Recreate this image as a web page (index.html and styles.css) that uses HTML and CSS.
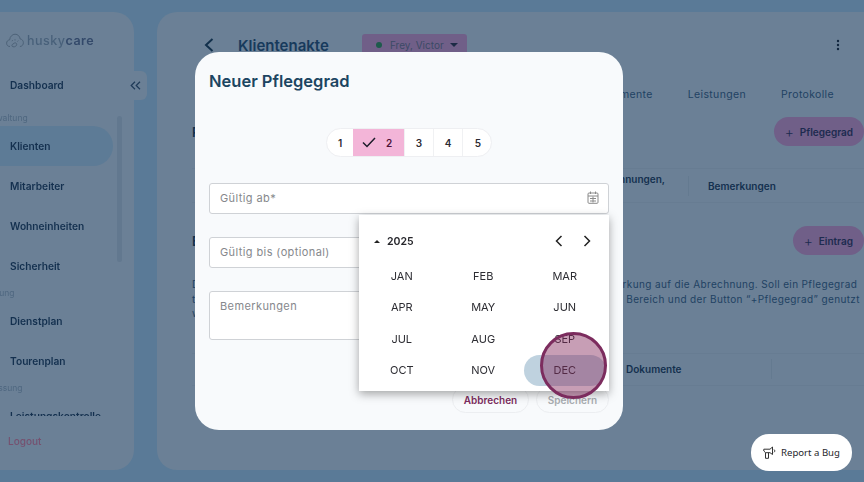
FILE: index.html
```html
<!DOCTYPE html>
<html lang="de">
<head>
    <meta charset="UTF-8">
    <title>huskycare</title>
    <link rel="stylesheet" href="styles.css">
</head>
<body>
    <div class="page">
        <aside class="sidebar">
            <div class="logo">
                <svg width="18" height="15" viewBox="0 0 18 15" fill="none" stroke="#4d6278" stroke-width="1"><path d="M4 13.500C1.800 13.500.6 12 .6 10.200.6 8.300 2 7 3.600 6.900 4 3.500 6.400 1.200 9 1.200c2.800 0 4.800 2 5.200 4.800 1.900.2 3.200 1.800 3.200 3.700 0 2-1.400 3.800-3.500 3.800"/><path d="M7 13.800c-1.200-.3-1.500-1.800-.5-2.500l2-1.300c1-.6 2.200.2 2.200 1.400 0 1.300-1.500 2.800-3.700 2.400zM6 8.200l.6-1M9 7.500V6.300M11.500 8.500l.8-.9"/></svg>
                <span class="logo-text">husky<b>care</b></span>
            </div>
            <a class="nav-item nav-top">Dashboard</a>
            <div class="nav-scroll">
                <div class="nav-label nav-label-first">Verwaltung</div>
                <a class="nav-item active">Klienten</a>
                <a class="nav-item">Mitarbeiter</a>
                <a class="nav-item">Wohneinheiten</a>
                <a class="nav-item">Sicherheit</a>
                <div class="nav-label">Planung</div>
                <a class="nav-item">Dienstplan</a>
                <a class="nav-item">Tourenplan</a>
                <div class="nav-label">Erfassung</div>
                <a class="nav-item">Leistungskontrolle</a>
            </div>
            <div class="scrollbar"></div>
            <a class="logout">Logout</a>
            <div class="collapse">
                <svg width="11" height="9" viewBox="0 0 11 9" fill="none" stroke="#1f3a58" stroke-width="1.200"><path d="M5 .8 1.200 4.500 5 8.200M10 .8 6.200 4.500 10 8.200"/></svg>
            </div>
        </aside>

        <main class="content">
            <div class="top-row">
                <svg class="back" width="10" height="14" viewBox="0 0 10 14" fill="none" stroke="#12304c" stroke-width="2"><path d="M8.500 1 2 7l6.500 6"/></svg>
                <h1 class="page-title">Klientenakte</h1>
                <div class="client-chip">
                    <span class="dot"></span>
                    Frey, Victor
                    <span class="caret"></span>
                </div>
                <svg class="more" width="4" height="12" viewBox="0 0 4 12" fill="#12263f"><circle cx="2" cy="2" r="1.200"/><circle cx="2" cy="6" r="1.200"/><circle cx="2" cy="10" r="1.200"/></svg>
            </div>
            <div class="tabs">
                <span>Dokumente</span>
                <span>Leistungen</span>
                <span>Protokolle</span>
            </div>
            <div class="section-row">
                <h2>Pflegegrad</h2>
                <button class="add-btn"><span class="plus">+</span>Pflegegrad</button>
            </div>
            <div class="table table-one">
                <div></div>
                <div class="cell-two">Anerkennungen,<br>&nbsp;</div>
                <div class="cell-last">Bemerkungen</div>
            </div>
            <div class="section-row section-two">
                <h2>Einträge</h2>
                <button class="add-btn"><span class="plus">+</span>Eintrag</button>
            </div>
            <p class="note">Die Einstufung in einen Pflegegrad hat für Klienten, und den Betreuungsdienst Auswirkung auf die Abrechnung. Soll ein Pflegegrad<br>
            tatsächlich geändert oder neu eingetragen werden, sollte dafür ausschließlich dieser Bereich und der Button “+Pflegegrad” genutzt<br>
            werden.</p>
            <div class="table table-two">
                <div></div>
                <div class="cell-docs">Dokumente</div>
                <div></div>
            </div>
        </main>
    </div>

    <div class="modal">
        <h2 class="modal-title">Neuer Pflegegrad</h2>
        <div class="stepper-wrap">
            <div class="stepper">
                <div class="step step-first">1</div>
                <div class="step step-on">
                    <svg width="14" height="11" viewBox="0 0 14 11" fill="none" stroke="#1c1c2a" stroke-width="1.500"><path d="M1 5.500 5 9.500 13 1"/></svg>
                    <span>2</span>
                </div>
                <div class="step">3</div>
                <div class="step">4</div>
                <div class="step step-last">5</div>
            </div>
        </div>
        <div class="field">
            Gültig ab*
            <svg width="12" height="13" viewBox="0 0 12 13" fill="none" stroke="#8a8a8a" stroke-width="1"><rect x="1" y="2" width="10" height="10.300" rx="1"/><path d="M1 5h10M3.500.5v2.500M8.500.5v2.500M3 7.500h6M3 10h6M6 5.500v6"/></svg>
        </div>
        <div class="field">Gültig bis (optional)</div>
        <div class="field field-area">Bemerkungen</div>
        <div class="actions">
            <button class="btn-cancel">Abbrechen</button>
            <button class="btn-save">Speichern</button>
        </div>

        <div class="picker">
            <div class="picker-head">
                <span class="year-caret"></span>
                <span class="year">2025</span>
                <svg class="prev" width="8" height="12" viewBox="0 0 8 12" fill="none" stroke="#222" stroke-width="1.500"><path d="M6.500 1 1.500 6l5 5"/></svg>
                <svg class="next" width="8" height="12" viewBox="0 0 8 12" fill="none" stroke="#222" stroke-width="1.500"><path d="M1.500 1l5 5-5 5"/></svg>
            </div>
            <div class="months">
                <span>JAN</span><span>FEB</span><span>MAR</span>
                <span>APR</span><span>MAY</span><span>JUN</span>
                <span>JUL</span><span>AUG</span><span>SEP</span>
                <span>OCT</span><span>NOV</span><span class="month-on">DEC</span>
            </div>
            <div class="touch"></div>
        </div>
    </div>

    <button class="report">
        <svg width="13" height="13" viewBox="0 0 13 13" fill="none" stroke="#333" stroke-width="1"><path d="M.8 3.200h6.200L9.500 1v7.500L7 6.700H2.500L.8 5zM2.500 6.700v5.600h3V6.700M11 3.500c1 .6 1 2.200 0 2.800"/></svg>
        Report a Bug
    </button>
</body>
</html>
```

FILE: styles.css
```css
* {
    box-sizing: border-box;
}

body {
    margin: 0;
    width: 864px;
    height: 482px;
    overflow: hidden;
    position: relative;
    background-color: #5a7a97;
    font-family: 'Inter', 'Liberation Sans', sans-serif;
    color: #12304c;
}

button {
    font-family: inherit;
    border: none;
    padding: 0;
}

/* layout */
.page {
    display: flex;
    gap: 23px;
    margin-left: -30px;
    padding-top: 12px;
    height: 470px;
    filter: blur(0.4px);
}

/* sidebar */
.sidebar {
    flex: none;
    position: relative;
    width: 164px;
    background-color: #6b8096;
    border-radius: 20px;
}

.logo {
    display: flex;
    align-items: center;
    gap: 3px;
    height: 20px;
    margin: 18px 0 15px 36px;
}

.logo-text {
    font-size: 12.500px;
    font-weight: 500;
    color: #48607a;
    letter-spacing: 0.500px;
}

.logo-text b {
    font-weight: 600;
    color: #33496a;
}

.nav-item {
    display: flex;
    align-items: center;
    height: 40px;
    margin-right: 21px;
    padding-left: 40px;
    font-size: 10.200px;
    font-weight: 600;
    color: #14304f;
    white-space: nowrap;
}

.nav-item.active {
    background-color: #5d7b96;
    border-radius: 0 20px 20px 0;
}

.nav-scroll {
    height: 311px;
    overflow: hidden;
}

.nav-label {
    height: 15px;
    line-height: 15px;
    padding-left: 12px;
    font-size: 8.500px;
    color: #4f6780;
}

.nav-label-first {
    height: 21px;
    padding-top: 6px;
}

.scrollbar {
    position: absolute;
    left: 147px;
    top: 104px;
    width: 5px;
    height: 146px;
    border-radius: 3px;
    background-color: #62788f;
}

.logout {
    display: block;
    margin: 18px 0 0 38px;
    line-height: 14px;
    font-size: 10px;
    font-weight: 500;
    color: #76506f;
}

.collapse {
    position: absolute;
    left: 164px;
    top: 59px;
    width: 13px;
    height: 29px;
    padding: 10px 0 0 1px;
    background-color: #6b8096;
    border-radius: 0 6px 6px 0;
}

.collapse svg {
    display: block;
    margin-left: -5px;
}

/* main */
.content {
    flex: none;
    width: 707px;
    padding: 22px 0 0 35px;
    background-color: #6b8096;
    border-radius: 20px 0 0 20px;
}

.top-row {
    display: flex;
    align-items: center;
    height: 22px;
}

.back {
    margin-left: 12px;
}

.page-title {
    flex: none;
    width: 92px;
    margin: 0 0 0 24px;
    font-size: 15px;
    font-weight: 600;
    white-space: nowrap;
    color: #173a5c;
}

.client-chip {
    display: flex;
    align-items: center;
    width: 105px;
    height: 22px;
    margin-left: 32px;
    padding-left: 14px;
    background-color: #705f88;
    border-radius: 3px;
    font-size: 10px;
    color: #3b4a66;
    white-space: nowrap;
}

.dot {
    width: 6px;
    height: 6px;
    margin-right: 8px;
    border-radius: 50%;
    background-color: #1d5b4c;
}

.caret {
    margin-left: 6px;
    border-top: 4px solid #1c2a45;
    border-left: 4px solid transparent;
    border-right: 4px solid transparent;
}

.more {
    margin-left: auto;
    margin-right: 24px;
}

.tabs {
    display: flex;
    justify-content: flex-end;
    gap: 35px;
    height: 20px;
    margin: 29px 30px 0 0;
    line-height: 20px;
    font-size: 10.500px;
    letter-spacing: 0.350px;
    color: #1f4263;
}

.section-row {
    display: flex;
    align-items: center;
    justify-content: space-between;
    height: 29px;
    margin-top: 12px;
}

.section-row h2 {
    margin: 0;
    font-size: 13px;
    font-weight: 600;
    color: #12304c;
}

.section-two {
    margin-top: 23px;
}

.add-btn {
    display: flex;
    align-items: center;
    height: 29px;
    padding: 0 11px;
    background-color: #705f88;
    border-radius: 15px;
    font-size: 10px;
    font-weight: 600;
    color: #1d2b4f;
}

.plus {
    margin-right: 6px;
    font-size: 14px;
    font-weight: 300;
}

.table {
    display: grid;
    align-items: center;
    font-size: 10px;
    font-weight: 600;
    color: #14304f;
    border-top: 1px solid #677c92;
    border-bottom: 1px solid #677c92;
}

.table-one {
    grid-template-columns: 378px 118px 1fr;
    height: 35px;
    margin-top: 22px;
}

.cell-two {
    text-align: right;
    padding-right: 23px;
    line-height: 13px;
}

.cell-last {
    height: 20px;
    line-height: 20px;
    padding-left: 19px;
    border-left: 1px solid #647a90;
}

.note {
    margin: 22px 0 0;
    font-size: 10px;
    line-height: 14.500px;
    letter-spacing: 0.370px;
    color: #1f4263;
    white-space: nowrap;
}

.table-two {
    grid-template-columns: 434px 146px 1fr;
    height: 33px;
    margin-top: 32px;
}

.cell-docs {
    height: 20px;
    line-height: 20px;
    border-right: 1px solid #647a90;
}

/* modal */
.modal {
    position: absolute;
    left: 195px;
    top: 52px;
    width: 428px;
    height: 378px;
    padding: 18px 14px 0;
    background-color: #f8fafc;
    border-radius: 24px;
}

.modal-title {
    margin: 0;
    line-height: 22px;
    font-size: 16.500px;
    font-weight: 600;
    color: #1c4561;
}

.stepper-wrap {
    display: flex;
    justify-content: center;
    margin: 36px 0 26px;
}

.stepper {
    display: flex;
    height: 29px;
    background-color: #fff;
    border: 1px solid #eeeff2;
    border-radius: 15px;
    overflow: hidden;
}

.step {
    display: flex;
    align-items: center;
    justify-content: center;
    width: 29px;
    border-left: 1px solid #f0f1f3;
    font-size: 10px;
    font-weight: 600;
    color: #2b2b33;
}

.step-first {
    width: 26px;
    border-left: none;
}

.step-on {
    gap: 10px;
    width: 51px;
    padding-right: 3px;
    border-left: none;
    background-color: #f3b5d8;
    color: #4d1237;
}

.step-last {
    padding-left: 2px;
}

.field {
    display: flex;
    align-items: center;
    justify-content: space-between;
    height: 31px;
    margin-bottom: 23px;
    padding: 0 9px 2px 10px;
    background-color: #fff;
    border: 1px solid #cfd2d6;
    border-radius: 3px;
    font-size: 11px;
    letter-spacing: 0.400px;
    color: #86888c;
}

.field-area {
    align-items: flex-start;
    height: 49px;
    padding-top: 7px;
}

.actions {
    display: flex;
    justify-content: flex-end;
    gap: 7px;
    margin-top: -23px;
    padding-top: 46px;
}

.actions button {
    height: 27px;
    border: 1px solid #eceef1;
    border-radius: 14px;
    background-color: transparent;
    font-size: 10px;
    font-weight: 600;
}

.btn-cancel {
    width: 77px;
    color: #7c2c5e;
}

.btn-save {
    width: 73px;
    color: #a9adb1;
}

/* month picker */
.picker {
    position: absolute;
    left: 164px;
    top: 163px;
    width: 250px;
    height: 176px;
    padding: 15px 2px 0;
    background-color: #fff;
    box-shadow: 0 3px 9px rgba(0, 0, 0, 0.35);
}

.picker-head {
    display: flex;
    align-items: center;
    height: 22px;
    margin-bottom: 8px;
}

.year-caret {
    margin-left: 13px;
    border-bottom: 3px solid #222;
    border-left: 3px solid transparent;
    border-right: 3px solid transparent;
}

.year {
    margin-left: 7px;
    font-size: 10.500px;
    font-weight: 600;
    color: #26262b;
}

.prev {
    margin-left: auto;
}

.next {
    margin: 0 16px 0 20px;
}

.months {
    display: grid;
    grid-template-columns: repeat(3, 81.500px);
    grid-auto-rows: 31.500px;
}

.months span {
    display: flex;
    align-items: center;
    justify-content: center;
    font-size: 11px;
    color: #2d2d33;
}

.months .month-on {
    background-color: #bfd2df;
    border-radius: 16px;
}

.touch {
    position: absolute;
    left: 181px;
    top: 117px;
    width: 67px;
    height: 67px;
    border: 3px solid #7c2c5e;
    border-radius: 50%;
    background-color: rgba(130, 40, 90, 0.45);
}

/* report button */
.report {
    position: absolute;
    left: 751px;
    top: 434px;
    display: flex;
    align-items: center;
    gap: 5px;
    width: 101px;
    height: 37px;
    padding-left: 12px;
    border-radius: 18px;
    background-color: #fff;
    font-family: 'Noto Sans', sans-serif;
    font-size: 9.600px;
    color: #26262b;
}
```
